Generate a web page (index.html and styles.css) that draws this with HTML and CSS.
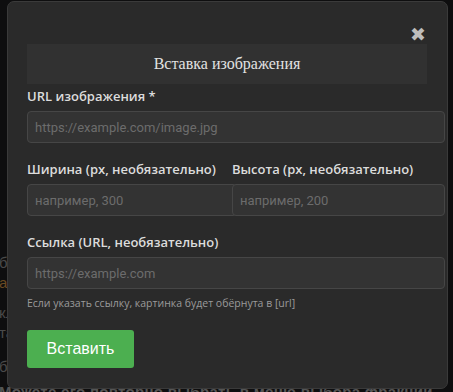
FILE: index.html
```
<!DOCTYPE html>
<html lang="ru">
<head>
    <meta charset="UTF-8">
    <meta name="viewport" content="width=device-width, initial-scale=1.0">
    <title>Вставка изображения</title>
    <link rel="stylesheet" href="styles.css">
</head>
<body>
    <div class="page">
        <p class="bg-line">бывает так, что выбранная фракция уже недоступна</p>
        <p class="bg-line orange">а также список доступных фракций</p>
        <p class="bg-line gap">кликните по названию, чтобы открыть подробности о ней х</p>
        <p class="bg-line">тактика и особенности каждой фракции описаны ниже ш</p>
        <p class="bg-line gap2">бывает, что фракцию нужно сменить после начала игры е</p>
        <p class="bg-line strong">Можете его повторно выбрать в меню выбора фракции</p>
    </div>

    <div class="modal">
        <div class="modal-top">
            <button class="close" type="button">&#10006;</button>
        </div>
        <h2 class="modal-title">Вставка изображения</h2>
        <form id="form-image">
            <div class="field">
                <label for="img-url">URL изображения *</label>
                <input type="text" id="img-url" placeholder="https://example.com/image.jpg">
            </div>
            <div class="field row">
                <div class="col">
                    <label for="img-w">Ширина (px, необязательно)</label>
                    <input type="text" id="img-w" placeholder="например, 300">
                </div>
                <div class="col">
                    <label for="img-h">Высота (px, необязательно)</label>
                    <input type="text" id="img-h" placeholder="например, 200">
                </div>
            </div>
            <div class="field">
                <label for="img-link">Ссылка (URL, необязательно)</label>
                <input type="text" id="img-link" placeholder="https://example.com">
                <p class="hint">Если указать ссылку, картинка будет обёрнута в [url]</p>
            </div>
            <button type="submit" class="btn-insert">Вставить</button>
        </form>
    </div>
</body>
</html>
```

FILE: styles.css
```
*{
    margin: 0;
    padding: 0;
    box-sizing: border-box;
}

body {
    background-color: #0e0e0f;
    font-family: 'Open Sans', sans-serif;
    width: 453px;
    height: 392px;
    overflow: hidden;
    position: relative;
}

.page{
    padding-top: 253px;
    color: #4a4a4a;
    font-family: 'Liberation Sans', sans-serif;
    font-size: 15px;
    white-space: nowrap;
}

.bg-line{
    line-height: 20px;
    margin-left: -1px;
}

.bg-line.orange{
    color: #6a4a22;
}

.bg-line.gap{
    margin-top: 10px;
}

.bg-line.gap2{
    margin-top: 14px;
}

.bg-line.strong{
    margin-top: 5px;
    font-weight: bold;
    color: #555;
    letter-spacing: 0.3px;
}

.modal{
    position: absolute;
    left: 7px;
    top: 1px;
    width: 441px;
    height: 388px;
    background-color: #2a2a2a;
    border: 1px solid #3a3a3a;
    border-radius: 7px;
    padding: 22px 2px 0 19px;
}

.modal-top{
    display: flex;
    justify-content: flex-end;
    height: 20px;
    padding-right: 19px;
}

.close{
    background: none;
    border: none;
    color: #bdbdbd;
    font-size: 19px;
    line-height: 20px;
    font-weight: bold;
    cursor: pointer;
    font-family: 'DejaVu Sans', sans-serif;
}

.modal-title{
    width: 400px;
    height: 40px;
    line-height: 40px;
    background-color: #313131;
    text-align: center;
    font-family: 'Liberation Serif', serif;
    font-weight: normal;
    font-size: 16px;
    color: #e2e2e2;
}

.field{
    margin-top: 3px;
    margin-bottom: 17px;
}

.field + .field{
    margin-top: 0;
}

label{
    display: block;
    font-size: 13px;
    font-weight: 600;
    line-height: 18px;
    color: #dcdcdc;
    margin-bottom: 6px;
    white-space: nowrap;
}

input{
    display: block;
    width: 418px;
    height: 32px;
    background-color: #333;
    border: 1px solid #464646;
    border-radius: 4px;
    padding: 0 7px;
    font-family: 'Roboto', sans-serif;
    font-size: 13px;
    color: #ddd;
}

input::placeholder{
    color: #6c6c6c;
}

.row{
    display: grid;
    grid-template-columns: 205px 213px;
}

.row input{
    width: 100%;
}

.row .col:first-child input{
    width: 210px;
}

.row .col:last-child input{
    position: relative;
}

.hint{
    margin-top: 6px;
    font-size: 10.5px;
    line-height: 16px;
    color: #9a9a9a;
    white-space: nowrap;
}

.btn-insert{
    margin-top: 2px;
    width: 107px;
    height: 38px;
    background-color: #4caf50;
    color: #fff;
    border: none;
    border-radius: 3px;
    font-family: 'Liberation Sans', sans-serif;
    font-size: 16px;
    cursor: pointer;
}
```
